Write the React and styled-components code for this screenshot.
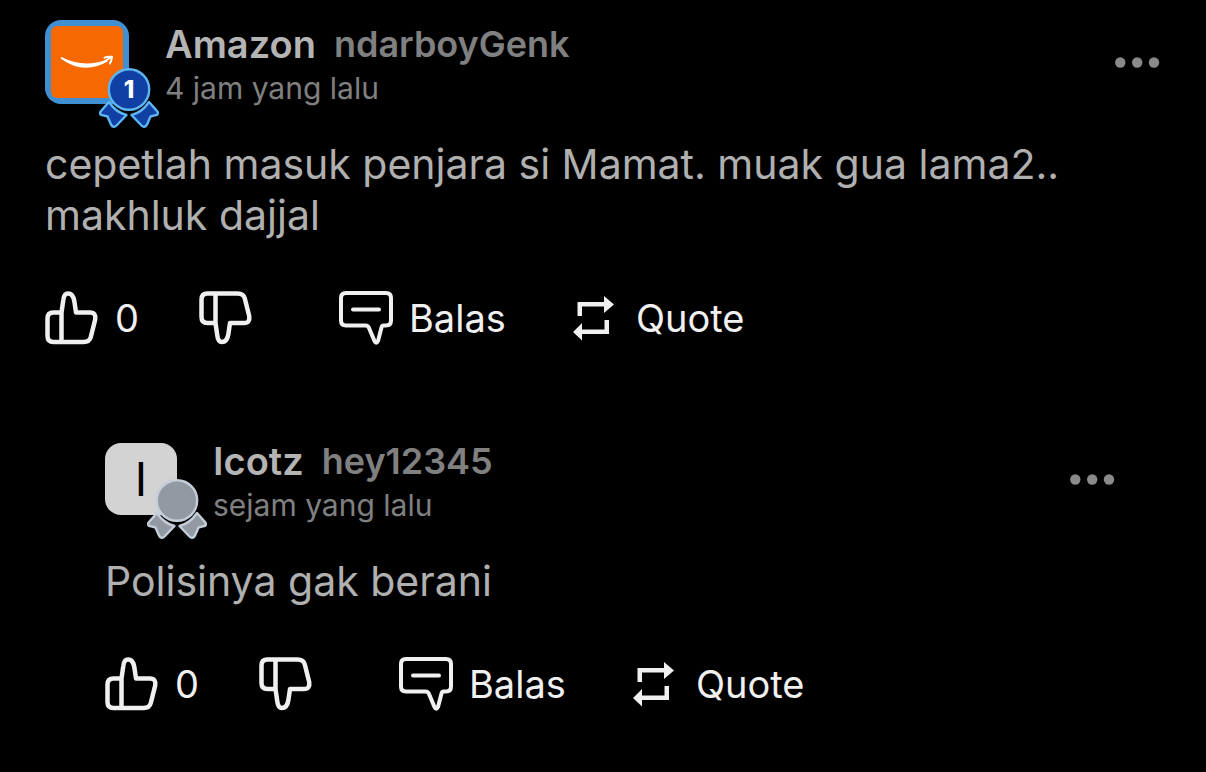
import React from "react";
import styled, { createGlobalStyle } from "styled-components";

const GlobalStyle = createGlobalStyle`
  *, *::before, *::after { box-sizing: border-box; }
  body {
    margin: 0;
    background: #000;
    color: #b0b0b0;
    font-family: Inter, "Liberation Sans", sans-serif;
  }
`;

const Thread = styled.main`
  padding: 14px 46px 60px 45px;
`;

const Comment = styled.article`
  padding: ${(p) => (p.$reply ? "86px 45px 0 60px" : "0")};
`;

const Header = styled.header`
  display: flex;
  align-items: center;
`;

const Avatar = styled.div`
  position: relative;
  flex: none;
  display: flex;
  align-items: center;
  justify-content: center;
  width: ${(p) => (p.$ring ? 84 : 72)}px;
  height: ${(p) => (p.$ring ? 84 : 72)}px;
  border-radius: 16px;
  background: ${(p) => p.$color};
  color: #000;
  font-size: 46px;
  line-height: 72px;
`;

const BadgeSlot = styled.span`
  position: absolute;
  right: -30px;
  bottom: -24px;
  display: flex;
`;

const Byline = styled.div`
  flex: 1;
  min-width: 0;
  padding: 8px 0 0 36px;
`;

const Names = styled.div`
  display: flex;
  gap: 18px;
  font-weight: 600;
  line-height: 44px;
`;

const DisplayName = styled.span`
  color: #b4b4b4;
  font-size: 38px;
`;

const Handle = styled.span`
  color: #808080;
  font-size: 36px;
`;

const Time = styled.time`
  display: block;
  color: #808080;
  font-size: 30px;
  line-height: 44px;
`;

const MoreButton = styled.button`
  display: flex;
  padding: 0;
  border: 0;
  background: none;
  color: #8a8a8a;
  cursor: pointer;
`;

const Body = styled.p`
  margin: 29px 0 50px;
  font-size: 41px;
  line-height: 51px;
`;

const Actions = styled.div`
  display: grid;
  grid-template-columns: 154px 140px 234px auto;
  justify-content: start;
`;

const ActionButton = styled.button`
  display: flex;
  align-items: center;
  gap: ${(p) => p.$gap || 16}px;
  height: 54px;
  padding: 0;
  border: 0;
  background: none;
  color: #f0f0f0;
  font: inherit;
  font-size: 38px;
  cursor: pointer;
`;

function ThumbIcon({ down }) {
  return (
    <svg width="54" height="54" viewBox="0 0 54 54" fill="none" stroke="currentColor" strokeWidth="4.500" strokeLinejoin="round" aria-hidden="true">
      <g transform={down ? "matrix(1 0 0 -1 0 53.5)" : undefined}>
        <path d="M16.500 21.500H8.500Q2.500 21.500 2.500 27.500V45Q2.500 51 8.500 51H38.500Q44.500 51 45.800 46L50.200 28.500Q51.300 21.500 45 21.500H31L29.300 10Q28 2.500 23 2.500Q19 2.500 18.300 9L16.500 21.500V51" />
      </g>
    </svg>
  );
}

function ReplyIcon() {
  return (
    <svg width="54" height="54" viewBox="0 0 54 54" fill="none" stroke="currentColor" strokeWidth="4" strokeLinejoin="round" strokeLinecap="round" aria-hidden="true">
      <path d="M7 2H47Q52 2 52 7V29.500Q52 34.500 47 34.500H44.500Q43 34.500 42.500 36.500L39 50Q37.300 53.500 35.500 50L30 37Q29 34.500 26.500 34.500H7Q2 34.500 2 29.500V7Q2 2 7 2Z" />
      <path d="M14 18.500H40" />
    </svg>
  );
}

function QuoteIcon() {
  return (
    <svg width="41" height="45" viewBox="0 0 41 45" fill="currentColor" aria-hidden="true">
      <path d="M4.500 20V6H31V0L41 8.500L31 17V10.500H9V20Z" />
      <path d="M36 24V38H9V44.500L0 36L9 27V33.500H31.500V24Z" />
    </svg>
  );
}

function SmileLogo() {
  return (
    <svg width="72" height="72" viewBox="6 6 72 72" aria-hidden="true">
      <rect x="6" y="6" width="72" height="72" rx="6" fill="#f56802" />
      <path d="M16.500 37Q39 48.500 61 39.700L63 41.300Q39 55.500 16 38.700Q15 37 16.500 37Z" fill="#fff" />
      <path d="M59.500 37.600Q63 36.300 67 36.800Q66.800 40 65 43.500" fill="none" stroke="#fff" strokeWidth="2" strokeLinecap="round" strokeLinejoin="round" />
      <path d="M60 41L66 37.500" stroke="#fff" strokeWidth="1.500" />
    </svg>
  );
}

const ribbon = "M10 34L2 43Q-0.500 46.500 3.500 47.200L8.500 48.500L12 56.500Q14.500 60.500 17.500 57.500L27.500 47Q17 44.500 10 34Z";

function RibbonBadge({ rank, fill, edge }) {
  return (
    <svg width="60" height="60" viewBox="0 0 60 60" fill={fill} stroke={edge} strokeWidth="2.400" strokeLinejoin="round">
      <path d={ribbon} />
      <path d={ribbon} transform="matrix(-1 0 0 1 60 0)" />
      <circle cx="30" cy="21.500" r="20.200" />
      {rank && (
        <text x="30" y="30" textAnchor="middle" fill="#fff" stroke="none" fontSize="24" fontWeight="800">
          {rank}
        </text>
      )}
    </svg>
  );
}

function MoreIcon() {
  return (
    <svg width="45" height="12" viewBox="0 0 45 12" fill="currentColor" aria-hidden="true">
      <circle cx="5.300" cy="6.500" r="5.200" />
      <circle cx="22.200" cy="6.500" r="5.200" />
      <circle cx="39" cy="6.500" r="5.200" />
    </svg>
  );
}

function CommentItem({ reply, name, handle, time, color, ring, picture, badge, likes, children }) {
  return (
    <Comment $reply={reply}>
      <Header>
        <Avatar $ring={ring} $color={color}>
          {picture}
          <BadgeSlot>
            <RibbonBadge {...badge} />
          </BadgeSlot>
        </Avatar>
        <Byline>
          <Names>
            <DisplayName>{name}</DisplayName>
            <Handle>{handle}</Handle>
          </Names>
          <Time>{time}</Time>
        </Byline>
        <MoreButton type="button" aria-label="Menu">
          <MoreIcon />
        </MoreButton>
      </Header>
      <Body>{children}</Body>
      <Actions>
        <ActionButton type="button" aria-label={`Suka ${likes}`}>
          <ThumbIcon />
          {likes}
        </ActionButton>
        <ActionButton type="button" aria-label="Tidak suka">
          <ThumbIcon down />
        </ActionButton>
        <ActionButton type="button">
          <ReplyIcon />
          Balas
        </ActionButton>
        <ActionButton type="button" $gap={22}>
          <QuoteIcon />
          Quote
        </ActionButton>
      </Actions>
    </Comment>
  );
}

export default function App() {
  return (
    <>
      <GlobalStyle />
      <Thread>
        <CommentItem
          name="Amazon"
          handle="ndarboyGenk"
          time="4 jam yang lalu"
          color="#3f8fd2"
          ring
          picture={<SmileLogo />}
          badge={{ rank: "1", fill: "#1040a4", edge: "#5db6f2" }}
          likes={0}
        >
          cepetlah masuk penjara si Mamat. muak gua lama2.. makhluk dajjal
        </CommentItem>
        <CommentItem
          reply
          name="Icotz"
          handle="hey12345"
          time="sejam yang lalu"
          color="#d3d3d3"
          picture="I"
          badge={{ fill: "#9299a3", edge: "#c3ceda" }}
          likes={0}
        >
          Polisinya gak berani
        </CommentItem>
      </Thread>
    </>
  );
}
